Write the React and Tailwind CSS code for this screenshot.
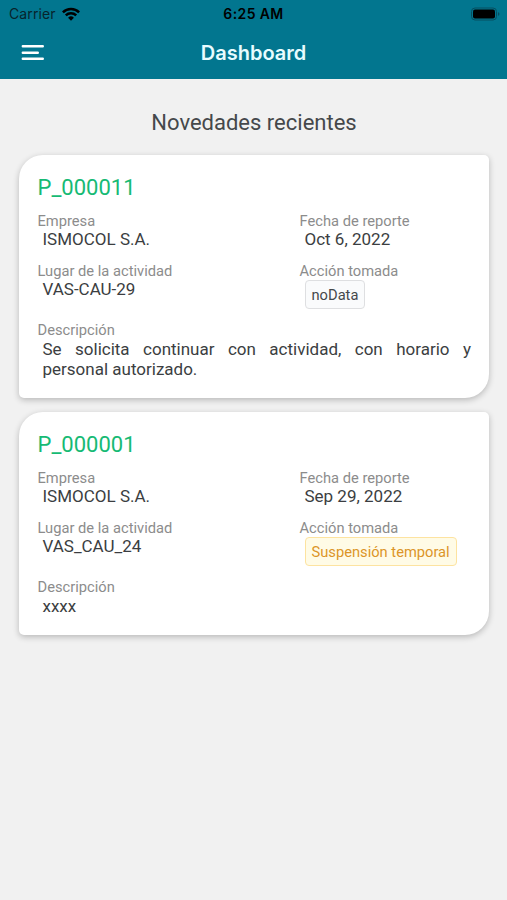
const reports = [
  {
    id: 'P_000011',
    company: 'ISMOCOL S.A.',
    date: 'Oct 6, 2022',
    place: 'VAS-CAU-29',
    action: 'noData',
    tone: 'neutral',
    description: 'Se solicita continuar con actividad, con horario y personal autorizado.',
  },
  {
    id: 'P_000001',
    company: 'ISMOCOL S.A.',
    date: 'Sep 29, 2022',
    place: 'VAS_CAU_24',
    action: 'Suspensión temporal',
    tone: 'warning',
    description: 'xxxx',
  },
];

const tones = {
  neutral: 'border-[#dedfe1] bg-[#fafbfc] text-[#45484b]',
  warning: 'border-[#fde3a0] bg-[#fffbe6] text-[#dc9528]',
};

function Field({ label, children }) {
  return (
    <div>
      <div className="text-[14.7px] leading-[18px] text-[#8c8c8c]">{label}</div>
      <div className="pl-[5px] text-[17px] leading-5 text-[#3b3e41]">{children}</div>
    </div>
  );
}

function ReportCard({ report }) {
  return (
    <article className="rounded-tl-[24px] rounded-tr-[5px] rounded-br-[24px] rounded-bl-[5px] bg-white pt-[21px] pr-[18px] pb-[18.5px] pl-[18.5px] shadow-[0_2px_6px_rgba(0,0,0,0.24)]">
      <h2 className="text-[22px] leading-6 text-[#16ba74]">{report.id}</h2>
      <div className="mt-3 grid grid-cols-[262px_1fr] gap-y-[13px]">
        <Field label="Empresa"><span className="block h-[19px] leading-[19px]">{report.company}</span></Field>
        <Field label="Fecha de reporte"><span className="block h-[19px] leading-[19px]">{report.date}</span></Field>
        <Field label="Lugar de la actividad"><span className="block leading-[19px]">{report.place}</span></Field>
        <Field label="Acción tomada">
          <span className={`flex h-[29px] w-fit items-center rounded border px-1.5 text-[14.7px] ${tones[report.tone]}`}>
            {report.action}
          </span>
        </Field>
      </div>
      <div className="mt-3">
        <Field label="Descripción">
          <p className="text-justify">{report.description}</p>
        </Field>
      </div>
    </article>
  );
}

function StatusBar() {
  return (
    <div className="grid h-[27px] grid-cols-3 items-center pr-[7px] pl-[9px] font-['Inter',sans-serif] text-black">
      <div className="flex items-center gap-[6px] text-[14px] text-[#07242c]">
        <span className="tracking-[0.1px]">Carrier</span>
        <svg width="18" height="14" viewBox="0 0 18 14" fill="none" stroke="#000" strokeWidth="2.5">
          <path d="M.9 5.3a11.5 11.5 0 0 1 16.2 0" />
          <path d="M3.8 8.3a7.4 7.4 0 0 1 10.4 0" />
          <path d="M9 13.8 6.1 10.8a4.1 4.1 0 0 1 5.8 0Z" fill="#000" stroke="none" />
        </svg>
      </div>
      <div className="-ml-[2px] text-center text-[14px] font-semibold tracking-[0.4px] whitespace-nowrap">6:25 AM</div>
      <svg className="justify-self-end" width="30" height="14" viewBox="0 0 30 14">
        <rect x="1.5" y="1" width="25" height="12" rx="3.5" fill="none" stroke="#064e60" />
        <rect x="3" y="2.5" width="22" height="9" rx="2" fill="#000" />
        <path d="M28 5v4q1.5-.8 1.5-2T28 5Z" fill="#064e60" />
      </svg>
    </div>
  );
}

export default function App() {
  return (
    <div className="min-h-[900px] bg-[#f1f1f1] font-['Roboto',sans-serif]">
      <header className="h-[79px] bg-[#02768f]">
        <StatusBar />
        <div className="grid h-[51px] grid-cols-3 items-center">
          <button className="ml-[20.5px] w-fit" aria-label="Menu">
            <svg width="24" height="18" viewBox="0 0 24 18" stroke="#fff" strokeWidth="2.4" strokeLinecap="round">
              <path d="M1.8 2.3h20M1.8 8.7h15M1.8 14.8h20" />
            </svg>
          </button>
          <h1 className="text-center font-['Inter',sans-serif] text-[20px] font-semibold text-[#e8fcff]">Dashboard</h1>
        </div>
      </header>
      <main className="pt-[30px] pr-[18px] pl-[19px]">
        <h2 className="text-center text-[22px] leading-[28px] text-[#45484b]">Novedades recientes</h2>
        <div className="mt-[18px] flex flex-col gap-[14.5px]">
          {reports.map((report) => (
            <ReportCard key={report.id} report={report} />
          ))}
        </div>
      </main>
    </div>
  );
}
